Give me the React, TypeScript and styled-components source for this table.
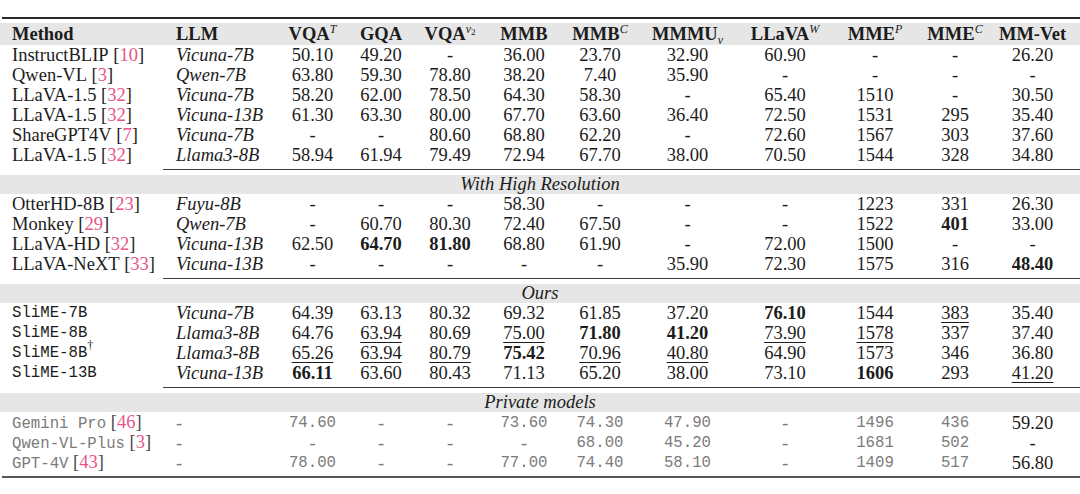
import React, { FC } from 'react';
import styled, { createGlobalStyle } from 'styled-components';

const GlobalStyle = createGlobalStyle`
  html, body {
    margin: 0;
    padding: 0;
    background: #ffffff;
  }
  body {
    font-family: "Liberation Serif", "Times New Roman", serif;
    color: #1c1c1c;
  }
`;

const COLS = '165px 110px 75px 62px 76px 72px 80px 95px 100px 80px 80px 85px';

type Kind = 'serif' | 'mono';

interface CellData {
  text: string;
  bold?: boolean;
  under?: boolean;
}

interface RowData {
  method: string;
  cite?: string;
  dagger?: boolean;
  llm: string;
  values: string[];
}

// "**" = best (bold), "__" = second best (underline)
const parse = (raw: string): CellData => {
  if (raw.startsWith('**')) return { text: raw.slice(2), bold: true };
  if (raw.startsWith('__')) return { text: raw.slice(2), under: true };
  return { text: raw };
};

const baseline: RowData[] = [
  { method: 'InstructBLIP', cite: '10', llm: 'Vicuna-7B', values: ['50.10', '49.20', '-', '36.00', '23.70', '32.90', '60.90', '-', '-', '26.20'] },
  { method: 'Qwen-VL', cite: '3', llm: 'Qwen-7B', values: ['63.80', '59.30', '78.80', '38.20', '7.40', '35.90', '-', '-', '-', '-'] },
  { method: 'LLaVA-1.5', cite: '32', llm: 'Vicuna-7B', values: ['58.20', '62.00', '78.50', '64.30', '58.30', '-', '65.40', '1510', '-', '30.50'] },
  { method: 'LLaVA-1.5', cite: '32', llm: 'Vicuna-13B', values: ['61.30', '63.30', '80.00', '67.70', '63.60', '36.40', '72.50', '1531', '295', '35.40'] },
  { method: 'ShareGPT4V', cite: '7', llm: 'Vicuna-7B', values: ['-', '-', '80.60', '68.80', '62.20', '-', '72.60', '1567', '303', '37.60'] },
  { method: 'LLaVA-1.5', cite: '32', llm: 'Llama3-8B', values: ['58.94', '61.94', '79.49', '72.94', '67.70', '38.00', '70.50', '1544', '328', '34.80'] },
];

const highRes: RowData[] = [
  { method: 'OtterHD-8B', cite: '23', llm: 'Fuyu-8B', values: ['-', '-', '-', '58.30', '-', '-', '-', '1223', '331', '26.30'] },
  { method: 'Monkey', cite: '29', llm: 'Qwen-7B', values: ['-', '60.70', '80.30', '72.40', '67.50', '-', '-', '1522', '**401', '33.00'] },
  { method: 'LLaVA-HD', cite: '32', llm: 'Vicuna-13B', values: ['62.50', '**64.70', '**81.80', '68.80', '61.90', '-', '72.00', '1500', '-', '-'] },
  { method: 'LLaVA-NeXT', cite: '33', llm: 'Vicuna-13B', values: ['-', '-', '-', '-', '-', '35.90', '72.30', '1575', '316', '**48.40'] },
];

const ours: RowData[] = [
  { method: 'SliME-7B', llm: 'Vicuna-7B', values: ['64.39', '63.13', '80.32', '69.32', '61.85', '37.20', '**76.10', '1544', '__383', '35.40'] },
  { method: 'SliME-8B', llm: 'Llama3-8B', values: ['64.76', '__63.94', '80.69', '__75.00', '**71.80', '**41.20', '__73.90', '__1578', '337', '37.40'] },
  { method: 'SliME-8B', dagger: true, llm: 'Llama3-8B', values: ['__65.26', '__63.94', '__80.79', '**75.42', '__70.96', '__40.80', '64.90', '1573', '346', '36.80'] },
  { method: 'SliME-13B', llm: 'Vicuna-13B', values: ['**66.11', '63.60', '80.43', '71.13', '65.20', '38.00', '73.10', '**1606', '293', '__41.20'] },
];

const privateModels: RowData[] = [
  { method: 'Gemini Pro', cite: '46', llm: '-', values: ['74.60', '-', '-', '73.60', '74.30', '47.90', '-', '1496', '436', '59.20'] },
  { method: 'Qwen-VL-Plus', cite: '3', llm: '-', values: ['-', '-', '-', '-', '68.00', '45.20', '-', '1681', '502', '-'] },
  { method: 'GPT-4V', cite: '43', llm: '-', values: ['78.00', '-', '-', '77.00', '74.40', '58.10', '-', '1409', '517', '56.80'] },
];

const Page = styled.div`
  width: 1080px;
  padding-top: 17px;
`;

const Rule = styled.div<{ $thick?: boolean; $indent?: number; $color?: string }>`
  height: ${p => (p.$thick ? 2 : 1)}px;
  margin-left: ${p => p.$indent ?? 2}px;
  background: ${p => p.$color ?? '#2a2a2a'};
`;

const ClineGap = styled.div`
  padding: 4px 0 5px;
`;

const Band = styled.div`
  display: flex;
  align-items: center;
  justify-content: center;
  height: 19px;
  background: #e6e6e6;
  font-style: italic;
  font-size: 18.5px;
  color: #1c1c1c;
`;

const Row = styled.div<{ $head?: boolean }>`
  display: grid;
  grid-template-columns: ${COLS};
  align-items: center;
  height: ${p => (p.$head ? 22 : 20)}px;
  background: ${p => (p.$head ? '#e6e6e6' : 'transparent')};
  margin-top: ${p => (p.$head ? 4 : 0)}px;
`;

const Cell = styled.span<{
  $left?: boolean;
  $pad?: number;
  $bold?: boolean;
  $under?: boolean;
  $italic?: boolean;
  $kind?: Kind;
  $muted?: boolean;
  $last?: boolean;
}>`
  display: block;
  white-space: nowrap;
  line-height: 20px;
  text-align: ${p => (p.$left ? 'left' : 'center')};
  padding-left: ${p => p.$pad ?? 0}px;
  padding-right: ${p => (p.$last ? 10 : 0)}px;
  font-family: ${p =>
    p.$kind === 'mono'
      ? '"Liberation Mono", "Courier New", monospace'
      : '"Liberation Serif", "Times New Roman", serif'};
  font-size: ${p => (p.$kind === 'mono' ? 15.7 : 18.5)}px;
  font-weight: ${p => (p.$bold ? 700 : 400)};
  font-style: ${p => (p.$italic ? 'italic' : 'normal')};
  color: ${p => (p.$muted ? '#7b7b7b' : '#1c1c1c')};
  text-decoration: ${p => (p.$under ? 'underline' : 'none')};
  text-decoration-thickness: 1px;
  text-underline-offset: 3px;
`;

const Cite = styled.span<{ $muted?: boolean }>`
  font-family: "Liberation Serif", "Times New Roman", serif;
  font-size: 18.5px;
  color: ${p => (p.$muted ? '#4a4a4a' : '#1c1c1c')};
  margin-left: 4.6px;

  em {
    font-style: normal;
    color: #e8558c;
  }
`;

const Sup = styled.sup`
  font-size: 12px;
  line-height: 0;
  vertical-align: 7px;
  font-style: italic;
  font-weight: 400;
`;

const Sub = styled.sub`
  font-size: 12px;
  line-height: 0;
  vertical-align: -4px;
  font-style: italic;
  font-weight: 400;
`;

const Tiny = styled.span`
  font-size: 9px;
  font-style: normal;
  vertical-align: -2px;
`;

const Dagger = styled.sup`
  font-family: "Liberation Serif", "Times New Roman", serif;
  font-size: 12px;
  line-height: 0;
  vertical-align: 8px;
`;

const headers: React.ReactNode[] = [
  <>VQA<Sup>T</Sup></>,
  <>GQA</>,
  <>VQA<Sup>v<Tiny>2</Tiny></Sup></>,
  <>MMB</>,
  <>MMB<Sup>C</Sup></>,
  <>MMMU<Sub>v</Sub></>,
  <>LLaVA<Sup>W</Sup></>,
  <>MME<Sup>P</Sup></>,
  <>MME<Sup>C</Sup></>,
  <>MM-Vet</>,
];

const HeaderRow: FC = () => (
  <Row $head>
    <Cell $left $pad={12} $bold>Method</Cell>
    <Cell $left $pad={11} $bold>LLM</Cell>
    {headers.map((h, i) => (
      <Cell key={i} $bold $last={i === headers.length - 1}>{h}</Cell>
    ))}
  </Row>
);

interface BodyRowProps {
  row: RowData;
  mono?: boolean;
  muted?: boolean;
}

const BodyRow: FC<BodyRowProps> = ({ row, mono, muted }) => (
  <Row>
    <Cell $left $pad={12} $kind={mono || muted ? 'mono' : 'serif'} $muted={muted}>
      {row.method}
      {row.dagger && <Dagger>†</Dagger>}
      {row.cite && (
        <Cite $muted={muted}>
          [<em>{row.cite}</em>]
        </Cite>
      )}
    </Cell>
    <Cell $left $pad={11} $italic={!muted} $muted={muted}>{row.llm}</Cell>
    {row.values.map((raw, i) => {
      const c = parse(raw);
      const last = i === row.values.length - 1;
      const monoNum = muted && !last && c.text !== '-';
      return (
        <Cell
          key={i}
          $last={last}
          $bold={c.bold}
          $under={c.under}
          $kind={monoNum ? 'mono' : 'serif'}
          $muted={muted && !last}
        >
          {c.text}
        </Cell>
      );
    })}
  </Row>
);

const Section: FC<{ title: string; rows: RowData[]; mono?: boolean; muted?: boolean }> = ({
  title,
  rows,
  mono,
  muted,
}) => (
  <>
    <ClineGap>
      <Rule $indent={163} $color="#3a3a3a" />
    </ClineGap>
    <Band>{title}</Band>
    {rows.map((r, i) => (
      <BodyRow key={i} row={r} mono={mono} muted={muted} />
    ))}
  </>
);

const App: FC = () => (
  <Page>
    <GlobalStyle />
    <Rule $thick />
    <HeaderRow />
    {baseline.map((r, i) => (
      <BodyRow key={i} row={r} />
    ))}
    <Section title="With High Resolution" rows={highRes} />
    <Section title="Ours" rows={ours} mono />
    <Section title="Private models" rows={privateModels} muted />
    <div style={{ height: 4 }} />
    <Rule $thick $color="#555555" />
  </Page>
);

export default App;
